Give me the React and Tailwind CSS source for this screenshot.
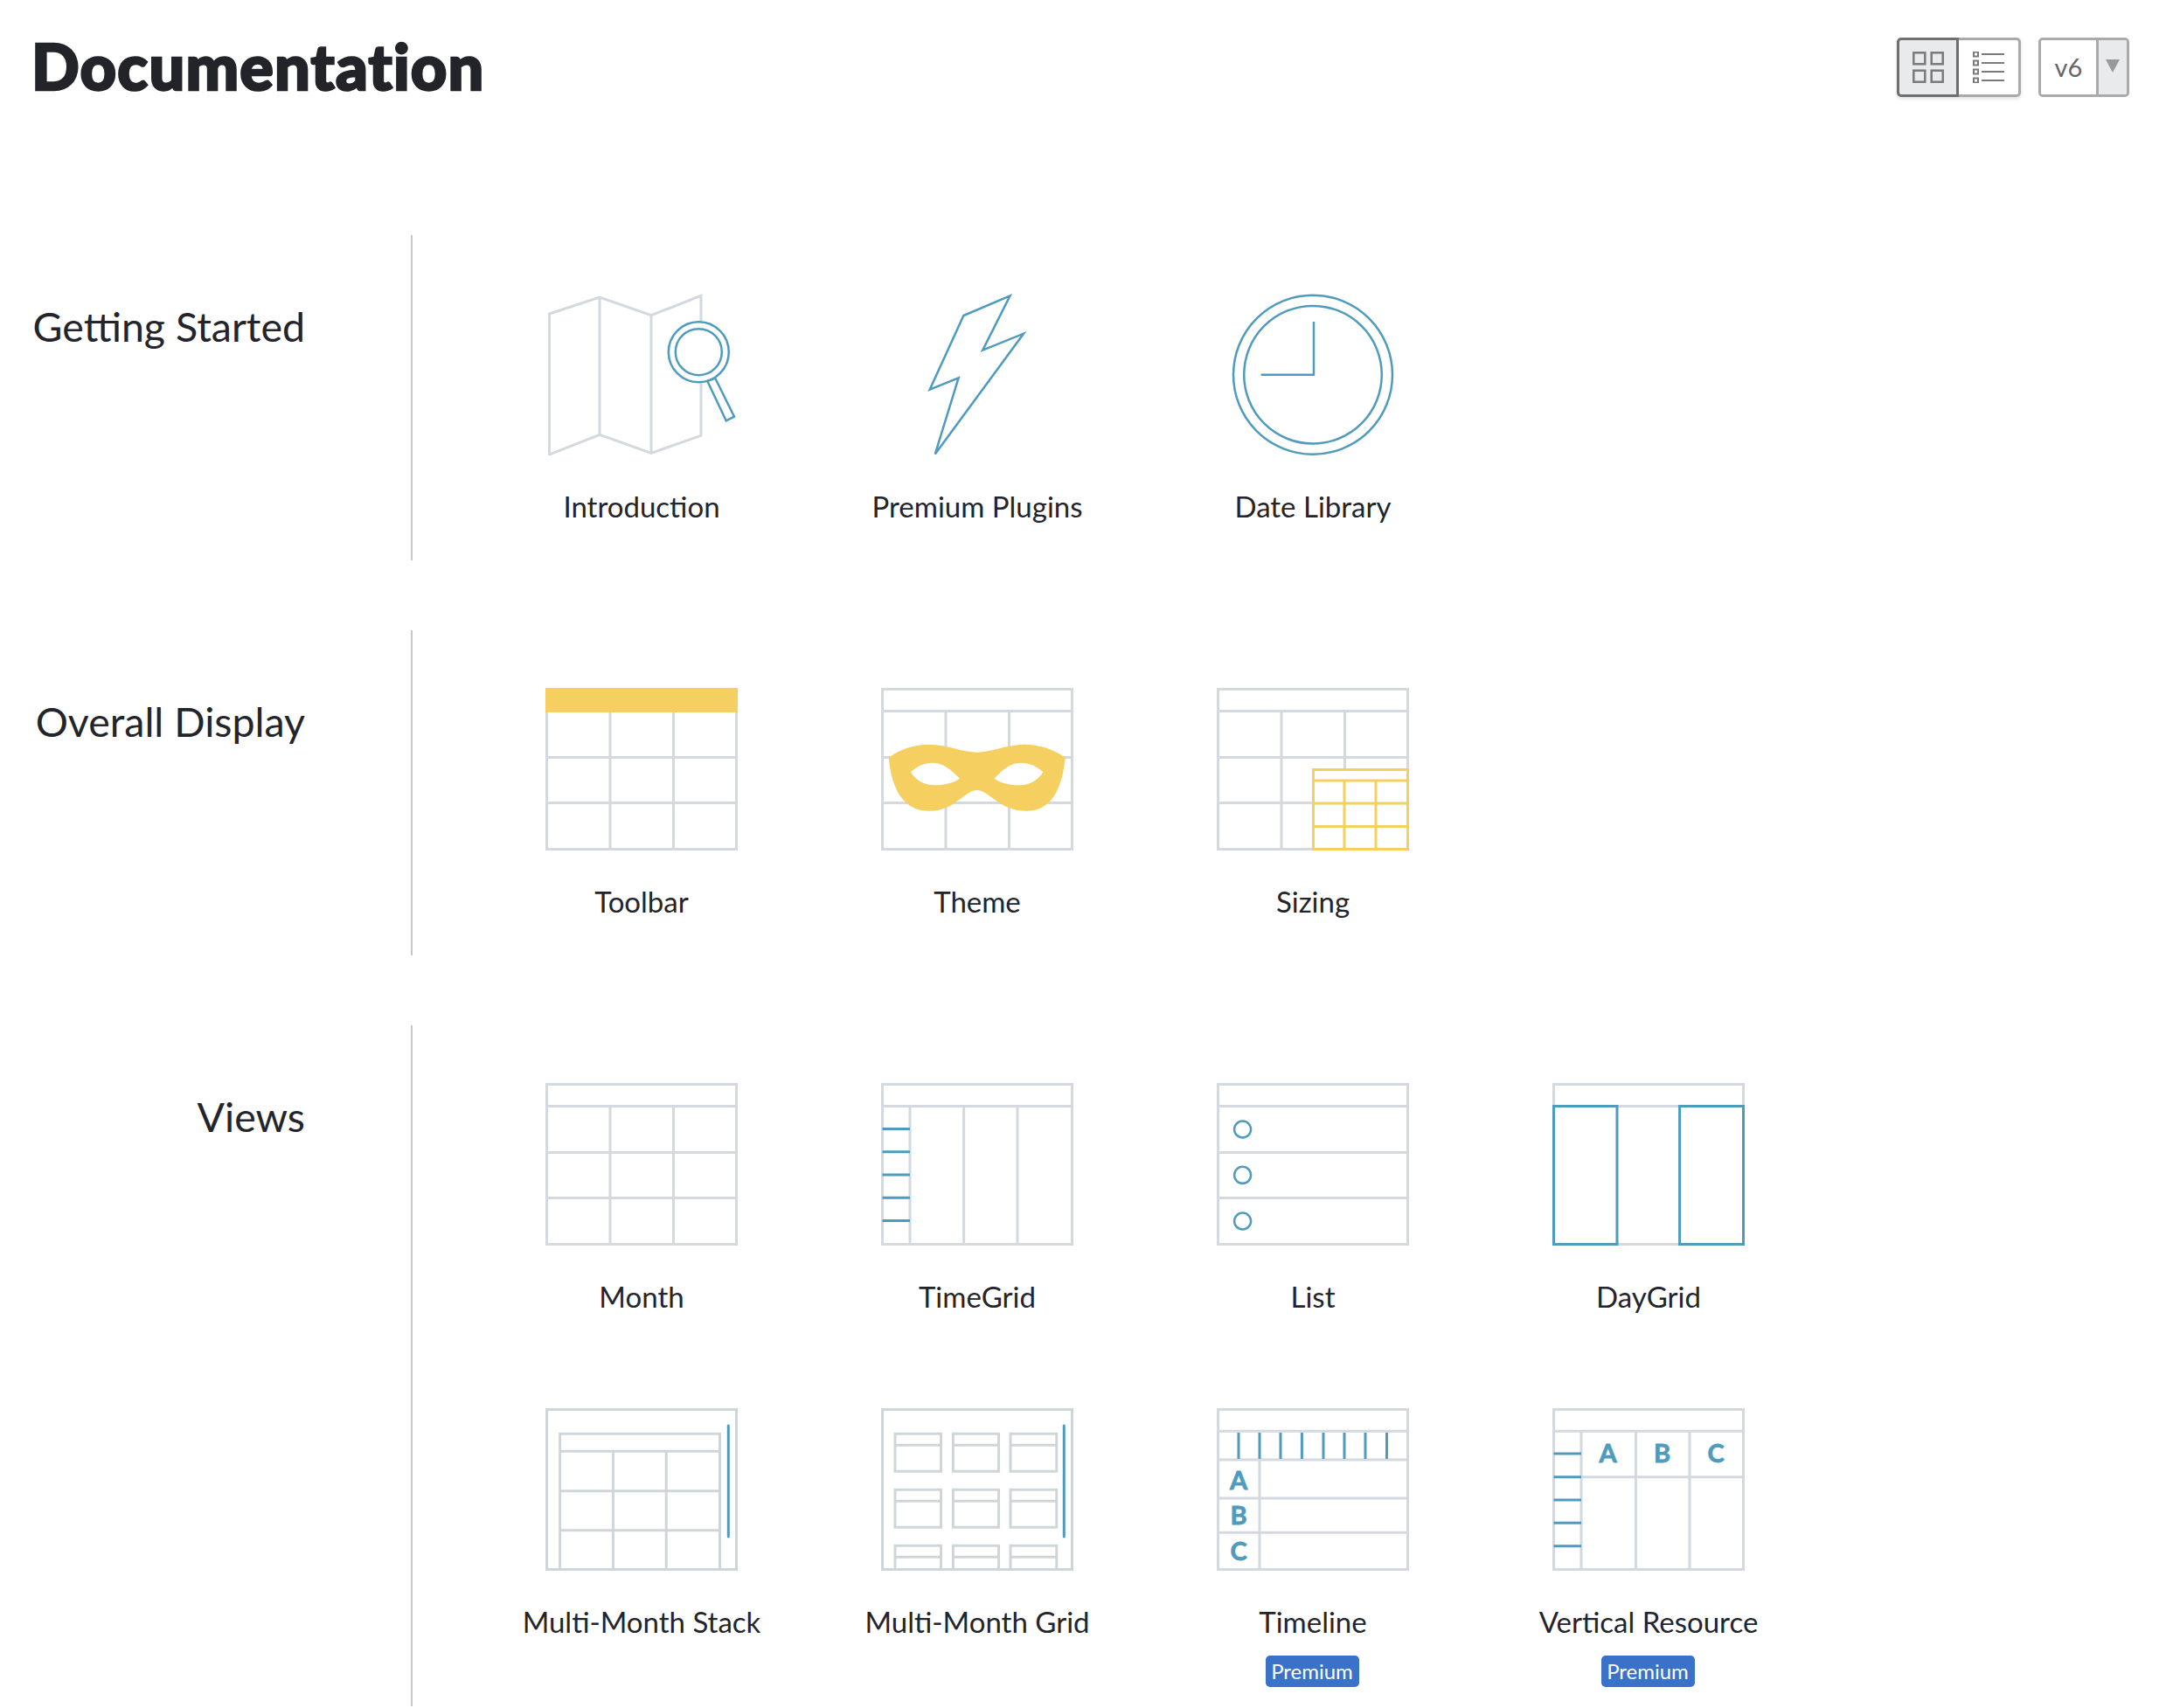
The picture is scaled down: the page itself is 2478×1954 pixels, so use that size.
const GRAY = '#d3d9de';
const BLUE = '#4f9bbe';
const YELLOW = '#f5cf60';

// all icons share one 220x186 canvas
function Icon({ children }) {
  return (
    <svg width="220" height="186" viewBox="0 0 220 186" fill="none" strokeWidth="3" className="block">
      {children}
    </svg>
  );
}

function Lines({ d, color = GRAY, width = 3 }) {
  return <path d={d} stroke={color} strokeWidth={width} />;
}

const OUTER = 'M1.5 1.5H218.5V184.5H1.5Z';
const HEADER = 'M1.5 26.5H218.5';
const ROWS = 'M1.5 79.5H218.5M1.5 131.5H218.5';
const COLS = 'M74 26.5V184.5M146.5 26.5V184.5';

function Letter({ x, y, children }) {
  return (
    <text
      x={x}
      y={y}
      textAnchor="middle"
      fontFamily="Lato, sans-serif"
      fontWeight="700"
      fontSize="29"
      fill={BLUE}
      stroke={BLUE}
      strokeWidth="0.8"
    >
      {children}
    </text>
  );
}

function IntroductionIcon() {
  return (
    <Icon>
      <Lines d="M4.5 24L62 5L121 25.7L178 3.3V163.3L121 183.3L62 162.3L4.5 185ZM62 5V162.3M121 25.7V183.3" />
      <circle cx="175.3" cy="67.7" r="34.5" fill="white" stroke={BLUE} strokeWidth="2.5" />
      <circle cx="175.3" cy="67.7" r="26.5" fill="white" stroke={BLUE} strokeWidth="2.5" />
      <path d="M185.3 101L194.3 97.7L216 141.7L206.7 146.3Z" fill="white" stroke={BLUE} strokeWidth="2.5" />
    </Icon>
  );
}

function PluginsIcon() {
  return (
    <Icon>
      <path
        d="M147.6 3.3L94.4 26L55.7 110.7L88.6 97.3L61.8 184.5L163 46.7L116.2 65.7Z"
        stroke={BLUE}
        strokeWidth="2.5"
      />
    </Icon>
  );
}

function DateIcon() {
  return (
    <Icon>
      <circle cx="110" cy="93.7" r="91" stroke={BLUE} strokeWidth="2.5" />
      <circle cx="110" cy="93.7" r="78.8" stroke={BLUE} strokeWidth="2.5" />
      <path d="M111 33V93.7H50.6" stroke={BLUE} strokeWidth="2.5" />
    </Icon>
  );
}

function ToolbarIcon() {
  return (
    <Icon>
      <Lines d={`${OUTER}${ROWS}${COLS}`} />
      <rect x="0" y="0" width="220" height="28" fill={YELLOW} />
    </Icon>
  );
}

function ThemeIcon() {
  return (
    <Icon>
      <Lines d={`${OUTER}${HEADER}${ROWS}${COLS}`} />
      <path
        d="M8.7 79.7C22 70 38 64.7 55 64.7C75 64.7 95 74 109.7 73.7C124 74 144 64.7 164 64.7C181 64.7 197 70 210.7 79.7C208 105 200 141 166.5 140.7C135 141 124 117 109.7 117C95 117 85 141 55 140.7C20 141 11 105 8.7 79.7Z"
        fill={YELLOW}
      />
      <path d="M34 96.3C42 89 50 85.7 59 85.7C70 85.7 80 93 90 103.7C82 109 72 111.3 61.3 111.3C49 111.3 40 106 34 96.3Z" fill="white" />
      <path d="M185.4 96.3C177 89 169 85.7 160 85.7C149 85.7 139 93 129.4 103.7C137 109 147 111.3 158 111.3C170 111.3 179 106 185.4 96.3Z" fill="white" />
    </Icon>
  );
}

function SizingIcon() {
  return (
    <Icon>
      <Lines d={`${OUTER}${HEADER}${ROWS}${COLS}`} />
      <path d="M110.5 93.5H218.5V184.5H110.5Z" fill="white" stroke={YELLOW} />
      <Lines color={YELLOW} d="M110.5 106H218.5M110.5 132H218.5M110.5 158.5H218.5M146 106V184.5M182 106V184.5" />
    </Icon>
  );
}

function MonthIcon() {
  return (
    <Icon>
      <Lines d={`${OUTER}${HEADER}${ROWS}${COLS}`} />
    </Icon>
  );
}

function TimeGridIcon() {
  return (
    <Icon>
      <Lines d={`${OUTER}${HEADER}M33 26.5V184.5M94.7 26.5V184.5M156 26.5V184.5`} />
      <Lines color={BLUE} d="M1.5 52.5H33M1.5 78.7H33M1.5 105H33M1.5 131.3H33M1.5 157.5H33" />
    </Icon>
  );
}

function ListIcon() {
  return (
    <Icon>
      <Lines d={`${OUTER}${HEADER}${ROWS}`} />
      {[53, 105.3, 158].map((cy) => (
        <circle key={cy} cx="29.6" cy={cy} r="9.5" stroke={BLUE} strokeWidth="2.5" />
      ))}
    </Icon>
  );
}

function DayGridIcon() {
  return (
    <Icon>
      <Lines d={`${OUTER}${HEADER}`} />
      <Lines color={BLUE} d="M1.5 26.5H74V184.5H1.5ZM145.6 26.5H218.5V184.5H145.6Z" />
    </Icon>
  );
}

function StackIcon() {
  return (
    <Icon>
      <Lines color="#cfd6da" d={`${OUTER}M16.6 184.5V29.3H199.5V184.5M16.6 49.3H199.5M16.6 94.7H199.5M16.6 139.7H199.5M77.4 49.3V184.5M138.2 49.3V184.5`} />
      <path d="M209.3 20V147" stroke={BLUE} strokeWidth="3" strokeLinecap="round" />
    </Icon>
  );
}

function MultiGridIcon() {
  const xs = [[16, 68.5], [82.4, 134.6], [148, 200.8]];
  const ys = [29.3, 93.3];
  return (
    <Icon>
      <Lines color="#cfd6da" d={OUTER} />
      {xs.map(([l, r]) => (
        <g key={l}>
          {ys.map((t) => (
            <Lines key={t} color="#cfd6da" d={`M${l} ${t}H${r}V${t + 43}H${l}ZM${l} ${t + 13}H${r}`} />
          ))}
          <Lines color="#cfd6da" d={`M${l} 184.5V157.3H${r}V184.5M${l} 170.3H${r}`} />
        </g>
      ))}
      <path d="M209.3 20V147" stroke={BLUE} strokeWidth="3" strokeLinecap="round" />
    </Icon>
  );
}

function TimelineIcon() {
  return (
    <Icon>
      <Lines d={`${OUTER}M1.5 26.3H218.5M1.5 59H218.5M1.5 103H218.5M1.5 142.3H218.5M49 59V184.5`} />
      <Lines color={BLUE} d="M25 28V58M49 28V58M73 28V58M97.4 28V58M122 28V58M146 28V58M170 28V58M194.5 28V58" />
      <Letter x="25" y="93">A</Letter>
      <Letter x="25" y="133">B</Letter>
      <Letter x="25" y="174">C</Letter>
    </Icon>
  );
}

function VerticalResourceIcon() {
  return (
    <Icon>
      <Lines d={`${OUTER}M1.5 26.3H218.5M33 26.3V184.5M95.4 26.3V184.5M157 26.3V184.5M33 78.7H218.5`} />
      <Lines color={BLUE} d="M1.5 52H33M1.5 78.7H33M1.5 105H33M1.5 131.3H33M1.5 157.7H33" />
      <Letter x="63.6" y="62">A</Letter>
      <Letter x="125.6" y="62">B</Letter>
      <Letter x="187" y="62">C</Letter>
    </Icon>
  );
}

const sections = [
  {
    title: 'Getting Started',
    items: [
      { label: 'Introduction', Art: IntroductionIcon },
      { label: 'Premium Plugins', Art: PluginsIcon },
      { label: 'Date Library', Art: DateIcon },
    ],
  },
  {
    title: 'Overall Display',
    items: [
      { label: 'Toolbar', Art: ToolbarIcon },
      { label: 'Theme', Art: ThemeIcon },
      { label: 'Sizing', Art: SizingIcon },
    ],
  },
  {
    title: 'Views',
    items: [
      { label: 'Month', Art: MonthIcon },
      { label: 'TimeGrid', Art: TimeGridIcon },
      { label: 'List', Art: ListIcon },
      { label: 'DayGrid', Art: DayGridIcon },
      { label: 'Multi-Month Stack', Art: StackIcon },
      { label: 'Multi-Month Grid', Art: MultiGridIcon },
      { label: 'Timeline', Art: TimelineIcon, premium: true },
      { label: 'Vertical Resource', Art: VerticalResourceIcon, premium: true },
    ],
  },
];

function Item({ label, Art, premium }) {
  return (
    <div className={`flex flex-col items-center pt-[66px] ${premium ? 'pb-[22px]' : 'pb-[40px]'}`}>
      <Art />
      <div className="mt-[36px] text-[33px] leading-[44px] text-[#23252b]">{label}</div>
      {premium && (
        <span className="mt-[17px] mr-[2px] w-[107px] h-[36px] rounded-[5px] bg-[#3972c8] text-white text-[24px] leading-[36px] text-center">
          Premium
        </span>
      )}
    </div>
  );
}

function Section({ title, items }) {
  return (
    <section className="flex">
      <h2 className="w-[470px] shrink-0 pr-[121px] pt-[76px] text-right text-[46.5px] leading-[56px] font-normal text-[#23252b]">
        {title}
      </h2>
      <div className="border-l-2 border-[#c8c8c8] pl-[70px] grid grid-cols-[repeat(4,384px)]">
        {items.map((item) => (
          <Item key={item.label} {...item} />
        ))}
      </div>
    </section>
  );
}

function ViewToggle() {
  return (
    <div className="flex h-[68px] rounded-[5px] shadow-[0_2px_4px_rgba(0,0,0,0.12)]">
      <button className="w-[71px] flex items-center justify-center bg-[#e9eaec] border-[3px] border-[#6f6f6f] rounded-l-[5px]">
        <svg width="36" height="36" viewBox="0 0 36 36" fill="none" stroke="#7a7a7a" strokeWidth="2.5">
          <rect x="1.3" y="1.3" width="13" height="13" />
          <rect x="21.7" y="1.3" width="13" height="13" />
          <rect x="1.3" y="21.7" width="13" height="13" />
          <rect x="21.7" y="21.7" width="13" height="13" />
        </svg>
      </button>
      <button className="w-[71px] flex items-center justify-center bg-white border-y-[3px] border-r-[3px] border-[#aaaaaa] rounded-r-[5px]">
        <svg width="36" height="36" viewBox="0 0 36 36" fill="none" stroke="#7a7a7a" strokeWidth="2">
          {[3, 13, 23, 33].map((y) => (
            <g key={y}>
              <rect x="1" y={y - 2.5} width="5" height="5" />
              <path d={`M10 ${y}H36`} />
            </g>
          ))}
        </svg>
      </button>
    </div>
  );
}

function VersionSelect() {
  return (
    <div className="flex h-[68px] w-[104px] border-[3px] border-[#aaaaaa] rounded-[5px] overflow-hidden">
      <div className="w-[63px] flex items-center justify-center bg-white text-[29px] text-[#666666]">v6</div>
      <div className="flex-1 flex items-center justify-center bg-[#e9eaec] border-l-[3px] border-[#aaaaaa]">
        <svg width="16" height="15" viewBox="0 0 16 15" className="mb-[3px]">
          <path d="M0 0H16L8 15Z" fill="#999999" />
        </svg>
      </div>
    </div>
  );
}

export default function App() {
  return (
    <div className="w-[2478px] bg-white font-['Lato',sans-serif]">
      <header className="flex items-center justify-between pl-[36px] pr-[42px] pt-[43px] mb-[158px]">
        <h1 className="pb-[3px] text-[72px] leading-[65px] font-black tracking-[1.2px] text-[#22242a] [-webkit-text-stroke:2.5px_#22242a]">
          Documentation
        </h1>
        <div className="flex gap-[20px]">
          <ViewToggle />
          <VersionSelect />
        </div>
      </header>
      <main className="flex flex-col gap-[80px]">
        {sections.map((s) => (
          <Section key={s.title} {...s} />
        ))}
      </main>
    </div>
  );
}
